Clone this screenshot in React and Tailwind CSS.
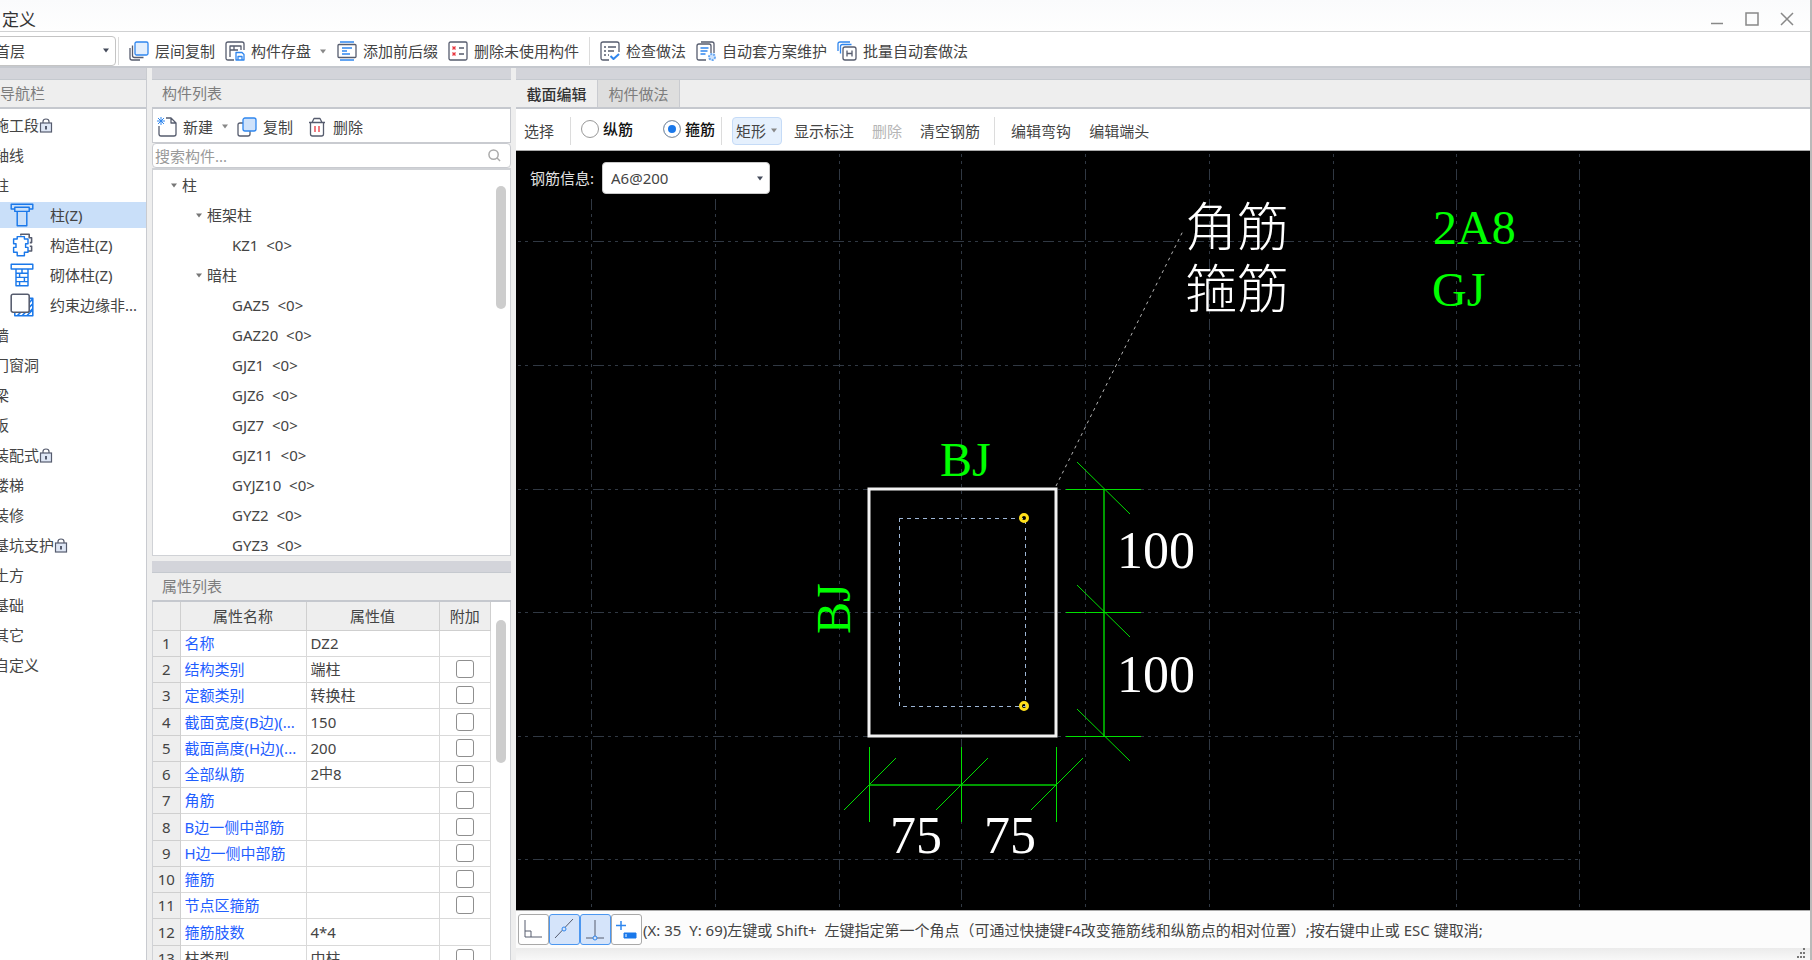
import React, { useState } from 'react'

const navItems = [
  { label: '施工段', locked: true },
  { label: '轴线' },
  {
    label: '柱',
    children: [
      { label: '柱(Z)', icon: 'column' },
      { label: '构造柱(Z)', icon: 'structure' },
      { label: '砌体柱(Z)', icon: 'masonry' },
      { label: '约束边缘非...', icon: 'edge' },
    ],
  },
  { label: '墙' },
  { label: '门窗洞' },
  { label: '梁' },
  { label: '板' },
  { label: '装配式', locked: true },
  { label: '楼梯' },
  { label: '装修' },
  { label: '基坑支护', locked: true },
  { label: '土方' },
  { label: '基础' },
  { label: '其它' },
  { label: '自定义' },
]

const tree = [
  { name: '框架柱', items: ['KZ1'] },
  {
    name: '暗柱',
    items: ['GAZ5', 'GAZ20', 'GJZ1', 'GJZ6', 'GJZ7', 'GJZ11', 'GYJZ10', 'GYZ2', 'GYZ3'],
  },
]

const properties = [
  { name: '名称', value: 'DZ2', noCheck: true },
  { name: '结构类别', value: '端柱' },
  { name: '定额类别', value: '转换柱' },
  { name: '截面宽度(B边)(...', value: '150' },
  { name: '截面高度(H边)(...', value: '200' },
  { name: '全部纵筋', value: <>2<span className="relative -top-0.5 text-sm leading-4">中</span>8</> },
  { name: '角筋', value: '' },
  { name: 'B边一侧中部筋', value: '' },
  { name: 'H边一侧中部筋', value: '' },
  { name: '箍筋', value: '' },
  { name: '节点区箍筋', value: '' },
  { name: '箍筋肢数', value: '4*4', noCheck: true },
  { name: '柱类型', value: '中柱', plain: true },
]

const DARK = '#565c6e'
const BLUE = '#2f86ee'

const Icon = ({ size = 20, children }) => (
  <svg
    width={size}
    height={size}
    viewBox="0 0 20 20"
    fill="none"
    stroke={DARK}
    strokeWidth="1.3"
    strokeLinejoin="round"
    className="shrink-0"
    aria-hidden="true"
  >
    {children}
  </svg>
)

const Caret = ({ className = 'text-[#777]' }) => (
  <svg width="8" height="5" viewBox="0 0 8 5" className={`shrink-0 ${className}`} aria-hidden="true">
    <path d="M1 .5h6L4 4.5z" fill="currentColor" />
  </svg>
)

const icons = {
  layerCopy: (
    <Icon>
      <path d="M1 7v10q0 2 2 2h8M3.500 4.500v10q0 2 2 2h9" />
      <rect x="6" y="1" width="13" height="13" rx="1.500" fill="#e3effd" stroke={BLUE} />
    </Icon>
  ),
  save: (
    <Icon>
      <path d="M9 19H3q-2 0-2-2V3q0-2 2-2h14q2 0 2 2v6M5 16V5h11v4M5 9h8M9 5v4" />
      <path d="M11 11.500h6l2 2V19h-8zM13 19v-3.500h4V19" stroke={BLUE} />
    </Icon>
  ),
  prefix: (
    <Icon>
      <path d="M3 1h14M3 19h14" stroke={BLUE} />
      <rect x="1" y="3.500" width="18" height="13" rx="1" />
      <path d="M5 7h10M5 10h5M5 13h8" stroke={BLUE} />
    </Icon>
  ),
  removeUnused: (
    <Icon>
      <rect x="1" y="1" width="18" height="18" rx="1.500" />
      <path d="M4.500 5.500l3 3m0-3l-3 3M4.500 11.500l3 3m0-3l-3 3" stroke="#e8343c" />
      <path d="M11 7h5M11 13h5" />
    </Icon>
  ),
  check: (
    <Icon>
      <path d="M9 19H3q-2 0-2-2V3q0-2 2-2h14q2 0 2 2v8M4 6h2M8 6h8M4 10h2M8 10h6M4 14h2M8 14h1" />
      <path d="M10.500 15l3 3L19 13" stroke={BLUE} strokeWidth="2" />
    </Icon>
  ),
  scheme: (
    <Icon>
      <path d="M10 19H3q-2 0-2-2V5q0-2 2-2h10q2 0 2 2v7M5 1h11q2 0 2 2v9" />
      <path d="M4.500 7h8M4.500 10h7M4.500 13h5" stroke={BLUE} />
      <circle cx="16" cy="16" r="3" stroke="#6aa9f3" strokeWidth="2" fill="#cfe3fb" strokeDasharray="2 1" />
    </Icon>
  ),
  batch: (
    <Icon>
      <path d="M1 10V3q0-2 2-2h10M3.500 12.500v-7q0-2 2-2h9" stroke={BLUE} />
      <rect x="6" y="6" width="13" height="13" rx="2" />
      <path d="M10 9.500v6M15 9.500v6M10 12.500h5" />
    </Icon>
  ),
  create: (
    <Icon>
      <path d="M9 1h5l5 5v11q0 2-2 2H4q-2 0-2-2V9M14 1v5h5" />
      <path d="M1 1l6 6M7 1L1 7M4 0v8M0 4h8" stroke={BLUE} strokeWidth="1" />
    </Icon>
  ),
  copy: (
    <Icon>
      <path d="M6 6H3q-2 0-2 2v9q0 2 2 2h8q2 0 2-2v-3" />
      <rect x="6" y="1" width="13" height="13" rx="2" fill="#cfe2fb" stroke={BLUE} />
    </Icon>
  ),
  trash: (
    <Icon>
      <path d="M2 5.500h16M5 5.500l2-4h6l2 4M3.500 5.500V17q0 2 2 2h9q2 0 2-2V5.500" />
      <path d="M8 9v6M12 9v6" stroke="#e8343c" />
    </Icon>
  ),
  column: (
    <Icon size={24}>
      <g stroke="#1a78ea" strokeWidth="1.200">
        <path d="M1 1h18v4h-3v2H4V5H1zM5.500 3.500h9M4 5V3.500h2M16 5V3.500h-2M6 7v12h8V7" />
      </g>
    </Icon>
  ),
  structure: (
    <Icon size={24}>
      <path d="M9 2V1h7v3h2v4h-1.500M16.500 11H18v4h-3" />
      <path d="M6 3h6v2h3v4h-2v3h2v4h-3v3H6v-3H3v-4h2V9H3V5h3z" fill="#fff" stroke="#1a78ea" strokeWidth="1.200" />
    </Icon>
  ),
  masonry: (
    <Icon size={24}>
      <g stroke="#1a78ea" strokeWidth="1.200">
        <path d="M1 1h18v4H1zM5 5v14h10V5M5 8.500h10M5 12h10M5 15.500h10M10 5v3.500M8 8.500V12M12 12v3.500M8 15.500V19" />
      </g>
    </Icon>
  ),
  edge: (
    <Icon size={24}>
      <path d="M4 16.500V19h15V4.500h-3M16 8l3-3M16 12l3-3M16 16l3-3M6 19l3-3M10 19l3-3M14 19l5-5" stroke="#1a78ea" />
      <rect x="1" y="1" width="15" height="15" rx="1.500" fill="#fff" />
    </Icon>
  ),
}

const Lock = () => (
  <svg width="14" height="15" viewBox="0 0 14 15" fill="none" stroke={DARK} strokeWidth="1.200" aria-hidden="true">
    <path d="M4 5V3.500Q4 1 7 1t3 2.500V5" />
    <rect x="1.500" y="5" width="11" height="9" fill="#dfe7f5" />
    <path d="M7 8v3.500" strokeWidth="2" />
  </svg>
)

const ToolButton = ({ icon, label, caret }) => (
  <button type="button" className="flex items-center gap-1.5 whitespace-nowrap">
    {icons[icon]}
    {label}
    {caret && <Caret className="ml-0.5 text-[#888]" />}
  </button>
)

const Divider = () => <span className="h-7 w-px shrink-0 bg-[#dcdcdc]" />

const Strip = () => <div className="h-3 shrink-0 border-b border-[#c5c9cf] bg-[#d3d4da]" />

const PanelTitle = ({ children, className = 'pl-2.5' }) => (
  <h2 className={`h-[29px] shrink-0 border-b-2 border-[#c5c8ce] bg-[#eee] leading-[26px] text-[#7d7d7d] ${className}`}>
    {children}
  </h2>
)

const TitleBar = () => (
  <header className="flex h-8 shrink-0 items-center justify-between border-b border-[#d0d1d2] bg-linear-to-b from-[#fafbfc] to-[#fefefe] pr-4 pl-0.5">
    <h1 className="pt-2 text-[17px] text-[#333]">定义</h1>
    <div className="flex items-center gap-[21px] pt-1.5 text-[#888]">
      <button type="button" aria-label="minimize">
        <svg width="14" height="14" stroke="currentColor" strokeWidth="1.500"><path d="M1 11.500h12" /></svg>
      </button>
      <button type="button" aria-label="maximize">
        <svg width="14" height="14" fill="none" stroke="currentColor" strokeWidth="1.500"><path d="M1 1h12v12H1z" /></svg>
      </button>
      <button type="button" aria-label="close">
        <svg width="14" height="14" stroke="currentColor" strokeWidth="1.500"><path d="M1 1l12 12M13 1L1 13" /></svg>
      </button>
    </div>
  </header>
)

const MainToolbar = () => (
  <div className="flex h-9 shrink-0 items-center gap-2.5 border-b-2 border-[#c5c8ce] bg-white pt-1">
    <div className="flex items-center gap-0.5">
      <div className="relative -ml-1.5">
        <select
          aria-label="楼层"
          className="block h-[30px] w-[122px] appearance-none rounded border border-[#c4c4c4] bg-white leading-[26px] outline-none"
        >
          <option>首层</option>
        </select>
        <Caret className="absolute top-3 right-1.5 text-[#444b5a]" />
      </div>
      <Divider />
    </div>
    <ToolButton icon="layerCopy" label="层间复制" />
    <ToolButton icon="save" label="构件存盘" caret />
    <ToolButton icon="prefix" label="添加前后缀" />
    <ToolButton icon="removeUnused" label="删除未使用构件" />
    <Divider />
    <ToolButton icon="check" label="检查做法" />
    <ToolButton icon="scheme" label="自动套方案维护" />
    <ToolButton icon="batch" label="批量自动套做法" />
  </div>
)

const Navigation = () => {
  const [active, setActive] = useState('柱(Z)')

  return (
    <nav className="flex w-[147px] shrink-0 flex-col overflow-hidden border-r border-[#c9cbd0] bg-white">
      <Strip />
      <PanelTitle className="pl-0">导航栏</PanelTitle>
      <ul className="pt-px">
        {navItems.map((item) => (
          <li key={item.label}>
            <button type="button" className="-ml-1.5 flex h-[30px] items-center whitespace-nowrap">
              {item.label}
              {item.locked && <Lock />}
            </button>
            {item.children && (
              <ul>
                {item.children.map((child) => (
                  <li key={child.label} className="flex h-[30px] items-center">
                    <button
                      type="button"
                      onClick={() => setActive(child.label)}
                      className={`flex h-[26px] w-full items-center gap-4 pl-2.5 whitespace-nowrap ${
                        active === child.label ? 'bg-[#c9dff9]' : ''
                      }`}
                    >
                      {icons[child.icon]}
                      {child.label}
                    </button>
                  </li>
                ))}
              </ul>
            )}
          </li>
        ))}
      </ul>
    </nav>
  )
}

const ComponentTree = () => (
  <div className="relative h-[388px] shrink-0 overflow-hidden border border-t-2 border-[#d0d2d6] bg-white">
    <ul>
      <li>
        <div className="flex h-[30px] items-center gap-1 pl-[17px]"><Caret />柱</div>
        <ul>
          {tree.map((group) => (
            <li key={group.name}>
              <div className="flex h-[30px] items-center gap-1 pl-[42px]"><Caret />{group.name}</div>
              <ul>
                {group.items.map((item) => (
                  <li key={item} className="h-[30px] pl-[79px] leading-[30px]">
                    {item}&nbsp; &lt;0&gt;
                  </li>
                ))}
              </ul>
            </li>
          ))}
        </ul>
      </li>
    </ul>
    <div className="absolute top-4 right-1 h-[123px] w-2.5 rounded-full bg-[#cdcdcd]" />
  </div>
)

const PropertyTable = () => (
  <div className="relative min-h-0 flex-1 overflow-hidden border-x border-[#d0d2d6] bg-white">
    <table className="w-[338px] table-fixed border-collapse">
      <colgroup>
        <col className="w-[27px]" />
        <col className="w-[126px]" />
        <col className="w-[133px]" />
        <col />
      </colgroup>
      <thead>
        <tr className="h-7 bg-[#eee]">
          <th className="border-r border-b border-[#cfcfcf]" />
          <th className="border-r border-b border-[#cfcfcf] p-0 font-normal">属性名称</th>
          <th className="border-r border-b border-[#cfcfcf] p-0 font-normal">属性值</th>
          <th className="border-r border-b border-[#cfcfcf] p-0 font-normal">附加</th>
        </tr>
      </thead>
      <tbody>
        {properties.map((row, i) => (
          <tr key={row.name} className="h-[26px] nth-[4n]:h-[27px]">
            <td className="border-r border-b border-[#cfcfcf] bg-[#eee] p-0 text-center">{i + 1}</td>
            <td className={`border-r border-b border-[#d9d9d9] p-0 pl-1 whitespace-nowrap ${row.plain ? '' : 'text-[#1f5eff]'}`}>
              {row.name}
            </td>
            <td className="border-r border-b border-[#d9d9d9] p-0 pl-1 whitespace-nowrap">{row.value}</td>
            <td className="border-r border-b border-[#d9d9d9] p-0">
              {!row.noCheck && (
                <input
                  type="checkbox"
                  aria-label={row.name}
                  className="mx-auto block size-[18px] appearance-none rounded-[3px] border border-[#8f8f8f] checked:bg-[#2080f0]"
                />
              )}
            </td>
          </tr>
        ))}
      </tbody>
    </table>
    <div className="absolute top-[18px] right-1 h-[143px] w-2.5 rounded-full bg-[#cdcdcd]" />
  </div>
)

const ComponentPanel = () => (
  <section className="flex w-[359px] shrink-0 flex-col">
    <Strip />
    <PanelTitle>构件列表</PanelTitle>
    <div className="flex h-[34px] shrink-0 items-center border border-t-0 border-[#c9cbd0] bg-white pt-0.5 pl-1">
      <ToolButton icon="create" label="新建" caret />
      <div className="ml-2 flex gap-3.5">
        <ToolButton icon="copy" label="复制" />
        <ToolButton icon="trash" label="删除" />
      </div>
    </div>
    <div className="relative">
      <input
        type="text"
        aria-label="搜索构件"
        placeholder="搜索构件..."
        className="block h-[25px] w-full rounded border border-[#c9cbd0] bg-white px-0.5 outline-none placeholder:text-[#999]"
      />
      <svg width="13" height="13" viewBox="0 0 14 14" fill="none" stroke="#aaa" strokeWidth="1.600" className="absolute top-1.5 right-2.5" aria-hidden="true">
        <circle cx="6" cy="6" r="5" />
        <path d="M9.500 9.500L13 13" />
      </svg>
    </div>
    <ComponentTree />
    <div className="mt-[5px] flex min-h-0 flex-1 flex-col">
      <Strip />
      <PanelTitle>属性列表</PanelTitle>
      <PropertyTable />
    </div>
  </section>
)

const gridX = [75, 199, 323, 445, 569, 693, 817, 940, 1063]
const gridY = [90, 214, 338, 461, 585, 708]

const SectionDrawing = () => (
  <svg className="absolute inset-0 size-full" fill="none" aria-label="截面">
    <g stroke="#303843" shapeRendering="crispEdges" strokeDasharray="3 4 3 5 11 4">
      {gridX.map((x, i) => (
        <path key={x} d={`M${x} ${i < 2 ? 48 : 3}V757`} strokeDashoffset={i < 2 ? 45 : 0} />
      ))}
      {gridY.map((y) => (
        <path key={y} d={`M2 ${y}H1063`} />
      ))}
    </g>

    {/* leader to the rebar notes */}
    <path d="M540 335L667 80" stroke="#b5b5b5" strokeDasharray="3 4" />

    <rect x="353" y="338" width="187" height="247" stroke="#f2f2f2" strokeWidth="3" />
    <rect x="383" y="367" width="126" height="188" stroke="#9db6d6" strokeDasharray="4 4" shapeRendering="crispEdges" />
    <g stroke="#ffe01a" strokeWidth="3">
      <circle cx="508" cy="367" r="3.500" />
      <circle cx="508" cy="555" r="3.500" />
    </g>

    {/* height dimension */}
    <g stroke="#00e000">
      <path d="M588 338V585" strokeWidth="2" stroke="#009a00" />
      {[338, 461, 585].map((y) => (
        <React.Fragment key={y}>
          <path d={`M550 ${y}H625`} shapeRendering="crispEdges" />
          <path d={`M561 ${y - 27}L614 ${y + 25}`} />
        </React.Fragment>
      ))}
    </g>

    {/* width dimension */}
    <g stroke="#00e000">
      <path d="M353 634H540" strokeWidth="2" stroke="#009a00" />
      {[353, 445, 540].map((x) => (
        <React.Fragment key={x}>
          <path d={`M${x} 596V671`} shapeRendering="crispEdges" />
          <path d={`M${x - 25} 659L${x + 27} 607`} />
        </React.Fragment>
      ))}
    </g>

    <g fill="#fff" className="font-['Liberation_Serif','Noto_Sans_CJK_SC',serif] text-[52px]">
      <text x="601" y="417">100</text>
      <text x="601" y="541">100</text>
      <text x="374" y="702">75</text>
      <text x="468" y="702">75</text>
      <text x="669" y="95" className="font-light">角筋</text>
      <text x="669" y="157" className="font-light">箍筋</text>
    </g>
    <g fill="#0f0" className="font-['Liberation_Serif',serif] text-[48px]">
      <text x="917" y="93">2A8</text>
      <text x="916" y="155">GJ</text>
      <text x="424" y="325">BJ</text>
      <text transform="translate(334 483) rotate(-90)">BJ</text>
    </g>
  </svg>
)

const RadioOption = ({ label, checked, onChange }) => (
  <label className="flex items-center gap-1 pb-1 font-medium whitespace-nowrap text-[#111]">
    <input
      type="radio"
      name="rebar"
      checked={checked}
      onChange={onChange}
      className="size-[18px] shrink-0 appearance-none rounded-full border border-[#999] bg-white checked:bg-[#1a78ea] checked:shadow-[inset_0_0_0_4px_#fff]"
    />
    {label}
  </label>
)

const snapButtons = [
  { label: '正交', path: <path d="M5 4v17h17M5 15h6v6" stroke={DARK} /> },
  {
    label: '中点',
    on: true,
    path: <><path d="M4 22L22 3" stroke={DARK} /><circle cx="13" cy="13" r="2" stroke={BLUE} fill="#d5e4fa" /></>,
  },
  {
    label: '垂点',
    on: true,
    path: <><path d="M13 4v17M4 22h18" stroke={DARK} /><circle cx="13" cy="22" r="2" stroke={BLUE} fill="#d5e4fa" /></>,
  },
  {
    label: '动态输入',
    path: <><path d="M8 5v9M3 9.500h10" stroke={BLUE} strokeWidth="1.500" /><path d="M11 17h12v5H11z" fill="#1a78ea" stroke="#1a78ea" /><path d="M13 18v3" stroke="#fff" /></>,
  },
]

const SectionEditor = () => {
  const [rebar, setRebar] = useState('箍筋')

  return (
    <main className="flex min-w-0 flex-1 flex-col">
      <Strip />
      <div className="flex h-[29px] shrink-0 border-b-2 border-[#c5c8ce] bg-[#eee]">
        <button type="button" className="w-[82px] border-r border-[#c9cbd0] font-medium whitespace-nowrap text-[#333]">
          截面编辑
        </button>
        <button type="button" className="w-[82px] border-r border-[#c9cbd0] bg-[#dedede] whitespace-nowrap text-[#7d7d7d]">
          构件做法
        </button>
      </div>

      <div className="flex h-[42px] shrink-0 items-center border-b border-[#aaa] bg-white pt-0.5 pl-2 whitespace-nowrap">
        <button type="button" className="mr-4">选择</button>
        <Divider />
        <div className="mr-1.5 ml-2.5 flex gap-[30px]">
          <RadioOption label="纵筋" checked={rebar === '纵筋'} onChange={() => setRebar('纵筋')} />
          <RadioOption label="箍筋" checked={rebar === '箍筋'} onChange={() => setRebar('箍筋')} />
        </div>
        <Divider />
        <button
          type="button"
          className="mr-3 ml-2.5 flex h-7 items-center gap-1 rounded border border-[#c5dbf7] bg-[#e5f0fd] px-[3px]"
        >
          矩形
          <Caret className="text-[#888]" />
        </button>
        <button type="button" className="mr-[18px]">显示标注</button>
        <button type="button" disabled className="mr-[18px] text-[#b5b5b5]">删除</button>
        <button type="button" className="mr-3.5">清空钢筋</button>
        <Divider />
        <button type="button" className="mr-[18px] ml-4">编辑弯钩</button>
        <button type="button">编辑端头</button>
      </div>

      <div className="relative min-h-0 flex-1 overflow-hidden bg-black">
        <SectionDrawing />
        <div className="absolute top-[11px] left-3.5 flex items-center gap-2">
          <label htmlFor="rebar-info" className="text-[#e2e2e2]">钢筋信息:</label>
          <div className="relative">
            <select
              id="rebar-info"
              className="block h-8 w-[168px] appearance-none rounded border border-[#c9c9c9] bg-white pl-2 outline-none"
            >
              <option>A6@200</option>
            </select>
            <Caret className="absolute top-3.5 right-1.5 text-[#444b5a]" />
          </div>
        </div>
      </div>

      <footer className="shrink-0 border-t border-[#aaa] bg-[#fcfcfc]">
        <div className="flex h-[37px] items-center pl-0.5">
          {snapButtons.map((btn) => (
            <button
              key={btn.label}
              type="button"
              aria-label={btn.label}
              className={`h-[31px] w-[31px] shrink-0 rounded-[3px] border ${
                btn.on ? 'border-[#4c97f0] bg-[#d5e4fa]' : 'border-[#a9a9a9] bg-white'
              }`}
            >
              <svg viewBox="0 0 27 27" width="27" height="27" fill="none" className="mx-auto">{btn.path}</svg>
            </button>
          ))}
          <p className="overflow-hidden pl-px whitespace-nowrap">
            (X: 35&nbsp; Y: 69)左键或 Shift+&nbsp; 左键指定第一个角点（可通过快捷键F4改变箍筋线和纵筋点的相对位置）;按右键中止或 ESC 键取消;
          </p>
        </div>
        <div className="flex h-3 justify-end bg-linear-to-b from-[#ebebeb] to-[#f8f8f8] pr-1">
          <svg width="10" height="10" fill="#777" aria-hidden="true">
            <path d="M7 0h2v2H7zM4 4h2v2H4zM7 4h2v2H7zM1 8h2v2H1zM4 8h2v2H4zM7 8h2v2H7z" />
          </svg>
        </div>
      </footer>
    </main>
  )
}

const App = () => {
  return (
    <div className="flex h-screen flex-col overflow-hidden border-r-2 border-[#b9b9b9] bg-[#eee] font-['Noto_Sans','Noto_Sans_CJK_SC',sans-serif] text-[15px] leading-5 text-[#444]">
      <TitleBar />
      <MainToolbar />
      <div className="flex min-h-0 flex-1 gap-[5px]">
        <Navigation />
        <ComponentPanel />
        <SectionEditor />
      </div>
    </div>
  )
}

export default App
